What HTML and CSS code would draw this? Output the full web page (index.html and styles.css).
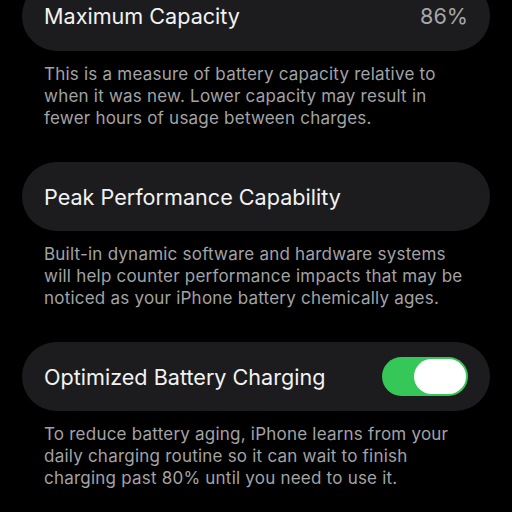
FILE: index.html
```html
<!DOCTYPE html>
<html>
<head>
<meta charset="utf-8">
<link rel="stylesheet" href="styles.css">
</head>
<body>
<div class="page">
  <div class="group first">
    <div class="card">
      <span class="title">Maximum Capacity</span>
      <span class="value">86%</span>
    </div>
    <p class="note">This is a measure of battery capacity relative to<br>when it was new. Lower capacity may result in<br>fewer hours of usage between charges.</p>
  </div>
  <div class="group">
    <div class="card">
      <span class="title">Peak Performance Capability</span>
    </div>
    <p class="note">Built-in dynamic software and hardware systems<br>will help counter performance impacts that may be<br>noticed as your iPhone battery chemically ages.</p>
  </div>
  <div class="group">
    <div class="card">
      <span class="title">Optimized Battery Charging</span>
      <span class="toggle"><span class="knob"></span></span>
    </div>
    <p class="note">To reduce battery aging, iPhone learns from your<br>daily charging routine so it can wait to finish<br>charging past 80% until you need to use it.</p>
  </div>
</div>
</body>
</html>
```
FILE: styles.css
```css
html, body {
  margin: 0;
  padding: 0;
  background: #000;
  width: 512px;
  height: 512px;
  overflow: hidden;
}
.page {
  padding: 0 22px;
  margin-top: -19px;
  display: flex;
  flex-direction: column;
  gap: 33px;
  font-family: Inter, "Noto Sans", sans-serif;
}
.group {
  display: flex;
  flex-direction: column;
  gap: 12px;
}
.card {
  background: #1c1c1e;
  border-radius: 35px;
  height: 69px;
  display: flex;
  align-items: center;
  justify-content: space-between;
  padding: 0 22px;
}
.first .card {
  height: 70px;
}
.title {
  color: #f2f2f2;
  font-size: 21.6px;
}
.value {
  color: #a6a6a8;
  font-size: 21.6px;
}
.note {
  margin: 0;
  padding: 0 22px;
  color: #a3a3a5;
  font-size: 17px;
  letter-spacing: 0.22px;
  line-height: 22px;
}
.toggle {
  width: 86px;
  height: 39px;
  border-radius: 20px;
  background: #36c759;
  display: flex;
  align-items: center;
  justify-content: flex-end;
  padding: 0 2px;
  box-sizing: border-box;
}
.knob {
  width: 52px;
  height: 35px;
  border-radius: 18px;
  background: #fff;
}
```
